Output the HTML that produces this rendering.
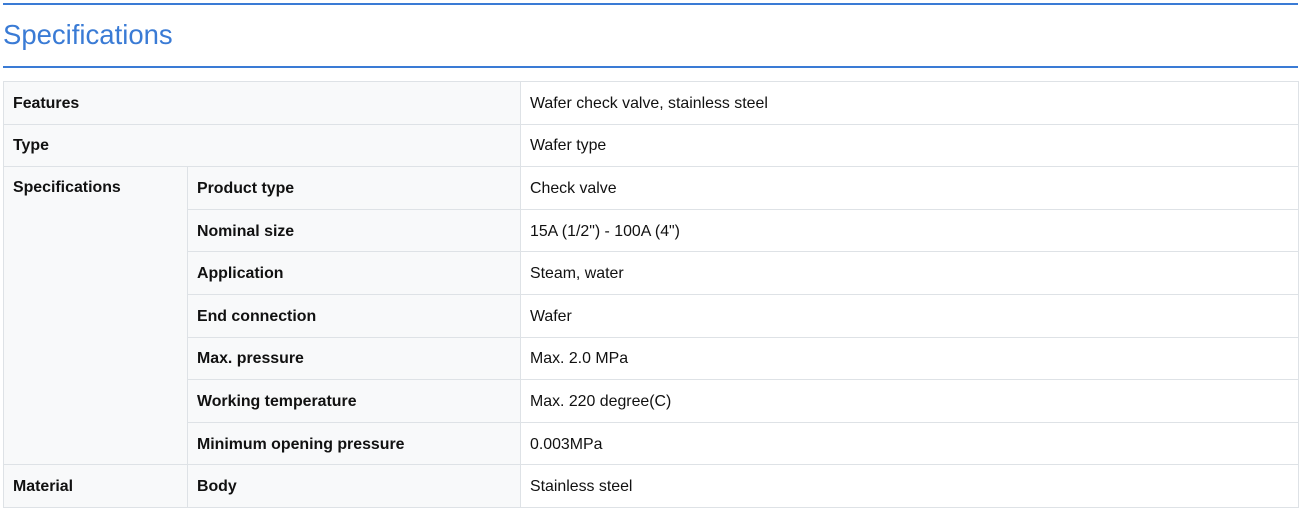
<!DOCTYPE html>
<html><head><style>
body{margin:0;background:#fff;font-family:"Liberation Sans",Arial,sans-serif;}
.rule1{position:absolute;left:3px;top:3px;width:1295px;height:2px;background:#3a7bd5;}
h2{position:absolute;left:3px;top:17px;margin:0;font-weight:normal;font-size:27.5px;color:#3a7bd5;line-height:36px;}
.rule2{position:absolute;left:3px;top:66px;width:1295px;height:2px;background:#3a7bd5;}
table{position:absolute;left:3px;top:81px;width:1296px;border-collapse:collapse;font-size:15.9px;color:#111;table-layout:fixed;}
td{border:1px solid #dee2e6;height:42.6px;padding:2px 8px 0 9px;box-sizing:border-box;vertical-align:middle;white-space:nowrap;}
td.l{background:#f8f9fa;font-weight:bold;}
td.v{background:#fff;}
td.tp{vertical-align:top;padding-top:12px;}
</style></head><body>
<div class="rule1"></div>
<h2>Specifications</h2>
<div class="rule2"></div>
<table>
<colgroup><col style="width:184px"><col style="width:333px"><col></colgroup>
<tr><td class="l" colspan="2">Features</td><td class="v">Wafer check valve, stainless steel</td></tr>
<tr><td class="l" colspan="2">Type</td><td class="v">Wafer type</td></tr>
<tr><td class="l tp" rowspan="7">Specifications</td><td class="l">Product type</td><td class="v">Check valve</td></tr>
<tr><td class="l">Nominal size</td><td class="v">15A (1/2") - 100A (4")</td></tr>
<tr><td class="l">Application</td><td class="v">Steam, water</td></tr>
<tr><td class="l">End connection</td><td class="v">Wafer</td></tr>
<tr><td class="l">Max. pressure</td><td class="v">Max. 2.0 MPa</td></tr>
<tr><td class="l">Working temperature</td><td class="v">Max. 220 degree(C)</td></tr>
<tr><td class="l">Minimum opening pressure</td><td class="v">0.003MPa</td></tr>
<tr><td class="l">Material</td><td class="l">Body</td><td class="v">Stainless steel</td></tr>
</table>
</body></html>
